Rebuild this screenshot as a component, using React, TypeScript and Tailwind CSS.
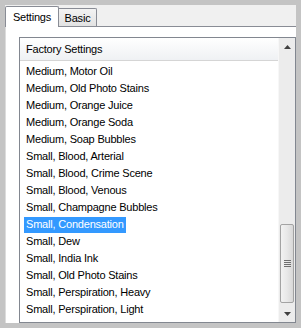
import React from 'react';

const items = [
  'Medium, Motor Oil',
  'Medium, Old Photo Stains',
  'Medium, Orange Juice',
  'Medium, Orange Soda',
  'Medium, Soap Bubbles',
  'Small, Blood, Arterial',
  'Small, Blood, Crime Scene',
  'Small, Blood, Venous',
  'Small, Champagne Bubbles',
  'Small, Condensation',
  'Small, Dew',
  'Small, India Ink',
  'Small, Old Photo Stains',
  'Small, Perspiration, Heavy',
  'Small, Perspiration, Light',
];

const selected = 'Small, Condensation';

export default function App() {
  return (
    <div
      className="w-[301px] h-[328px] bg-[#c4c4c4] p-[5px] text-[11px] tracking-[-0.2px] text-black overflow-hidden"
      style={{ fontFamily: '"Liberation Sans", Arial, sans-serif' }}
    >
      <div className="flex flex-col h-full bg-[#f0f0f0]">
        {/* Tabs */}
        <div className="flex items-end h-[21px] shrink-0">
          <div className="relative z-10 -mb-px w-[54px] h-[21px] bg-white border border-b-0 border-[#898c95] rounded-t-[2px] flex items-center justify-center">
            Settings
          </div>
          <div className="w-[38px] h-[18px] bg-gradient-to-b from-[#f3f3f3] to-[#e2e2e2] border border-l-0 border-b-0 border-[#898c95] rounded-tr-[2px] flex items-center justify-center pt-[1px]">
            Basic
          </div>
        </div>

        {/* Panel */}
        <div className="flex-1 flex flex-col bg-white border-t border-l border-t-[#898c95] border-l-[#dcdcdc] pt-[10px] pl-[13px] min-h-0">
          <div className="flex-1 flex border border-[#828790] min-h-0">
            <div className="flex-1 flex flex-col min-h-0 overflow-hidden">
              <div className="h-[23px] shrink-0 flex items-center pl-[6px] pt-[1px] bg-gradient-to-b from-white to-[#eff1f4] border-b border-[#d5d5d5]">
                Factory Settings
              </div>
              <div className="flex flex-col pt-[2px] overflow-hidden">
                {items.map((item) => (
                  <div key={item} className="h-[17px] shrink-0 flex items-center pl-[4px]">
                    <span
                      className={
                        item === selected
                          ? 'h-[16px] flex items-center px-[2px] bg-[#3399ff] text-white whitespace-nowrap'
                          : 'px-[2px] whitespace-nowrap'
                      }
                    >
                      {item}
                    </span>
                  </div>
                ))}
              </div>
            </div>

            {/* Scrollbar */}
            <div className="w-[17px] shrink-0 flex flex-col bg-[#ececec] border-l border-[#f7f7f7]">
              <div className="h-[17px] flex items-center justify-center">
                <svg width="7" height="4" viewBox="0 0 7 4">
                  <path d="M3.5 0 L7 4 L0 4 Z" fill="#404040" />
                </svg>
              </div>
              <div className="flex-1 flex flex-col pb-[1px]">
                <div className="h-[169px]" />
                <div className="h-[79px] mx-[1px] rounded-[2px] border border-[#a3a3a3] bg-gradient-to-r from-[#f2f2f2] via-[#e8e8e8] to-[#d8d8d8] flex flex-col items-center justify-center gap-[1px]">
                  <div className="w-[7px] h-px bg-[#6f6f6f]" />
                  <div className="w-[7px] h-px bg-[#6f6f6f]" />
                  <div className="w-[7px] h-px bg-[#6f6f6f]" />
                  <div className="w-[7px] h-px bg-[#6f6f6f]" />
                </div>
              </div>
              <div className="h-[17px] flex items-center justify-center">
                <svg width="7" height="4" viewBox="0 0 7 4">
                  <path d="M0 0 L7 0 L3.5 4 Z" fill="#404040" />
                </svg>
              </div>
            </div>
          </div>
        </div>
      </div>
    </div>
  );
}
